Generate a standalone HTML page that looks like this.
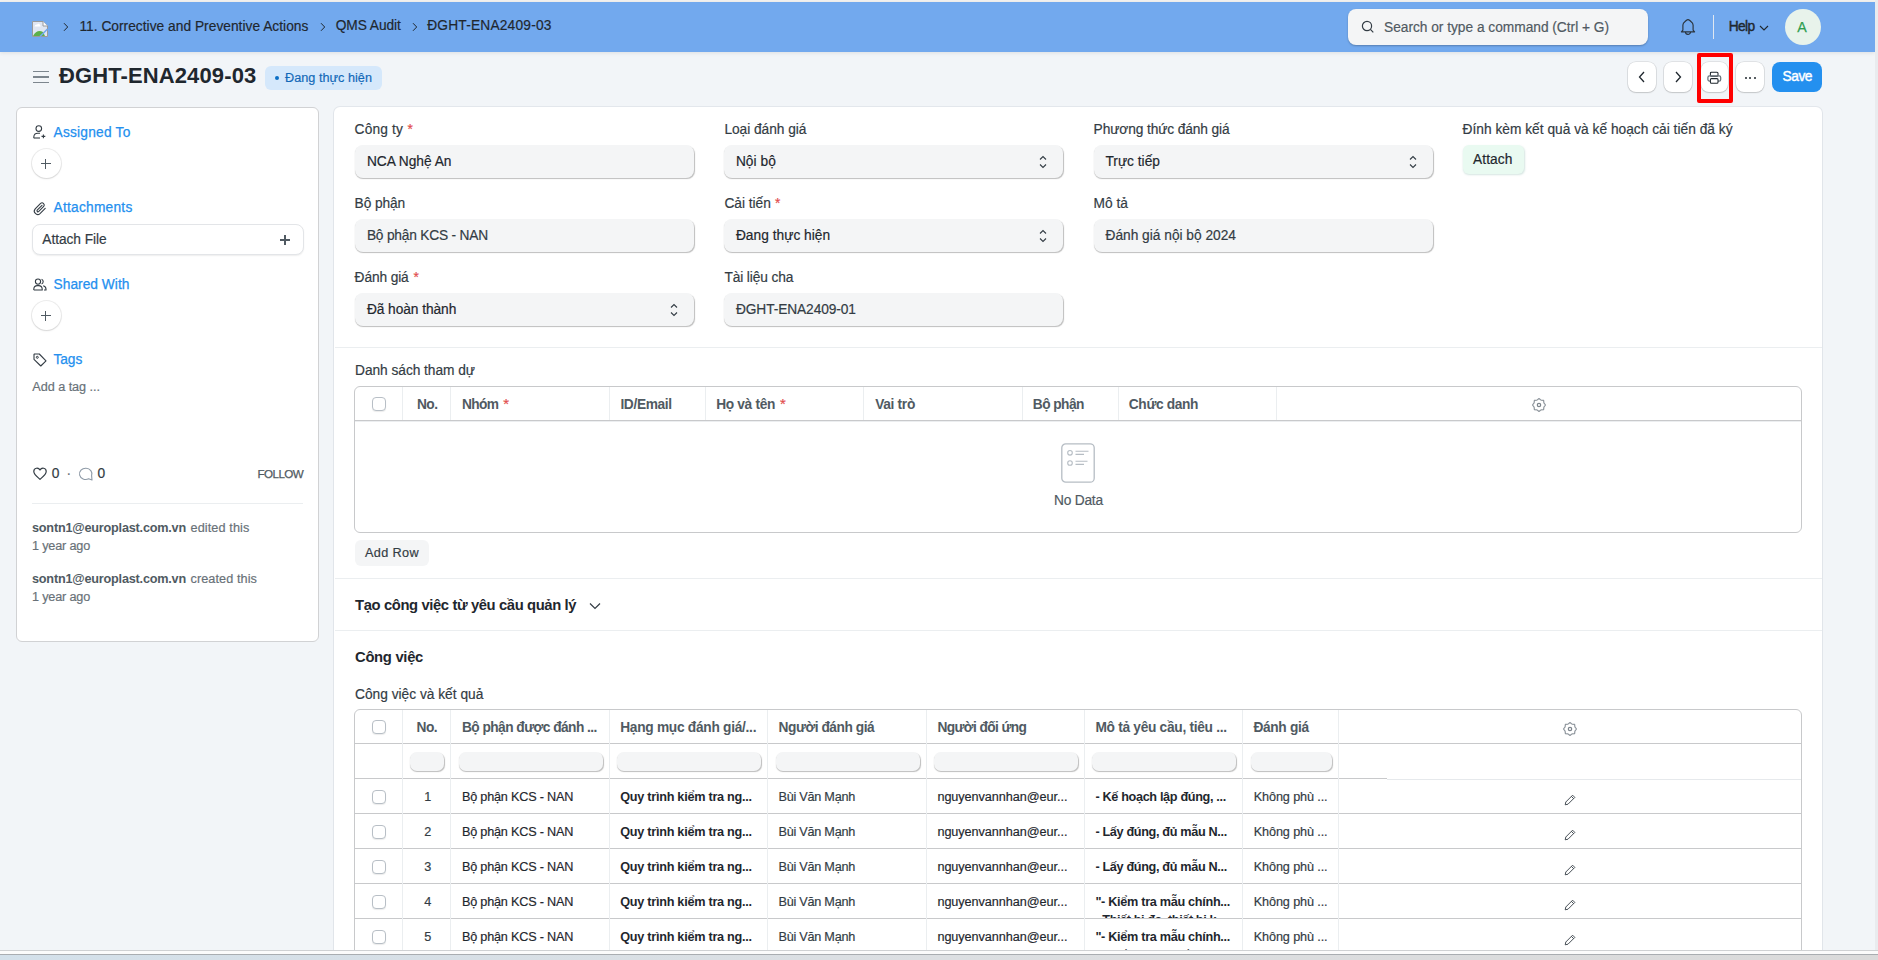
<!DOCTYPE html>
<html><head><meta charset="utf-8">
<style>
html,body{margin:0;padding:0;}
body{width:1878px;height:960px;overflow:hidden;position:relative;background:#f2f5f8;font-family:"Liberation Sans",sans-serif;}
.t{position:absolute;white-space:pre;font-family:"Liberation Sans",sans-serif;}
.a{position:absolute;box-sizing:border-box;}
.inp{position:absolute;box-sizing:border-box;background:#f4f5f6;border-radius:8px;box-shadow:0.8px 1px 1px rgba(0,0,0,0.26);}
.btn{position:absolute;box-sizing:border-box;background:#fff;border-radius:8px;box-shadow:0 0 0 0.8px rgba(0,0,0,0.10),0 1px 1.5px rgba(0,0,0,0.13);}
.vl{position:absolute;width:1px;background:#ebeef0;}
.hl{position:absolute;height:1px;}
.cb{position:absolute;box-sizing:border-box;width:14px;height:14px;border:1px solid #b8bfc6;border-radius:4px;background:#fff;box-shadow:0 1px 1px rgba(0,0,0,0.08);}
.fi{position:absolute;box-sizing:border-box;height:19px;top:752px;background:#f4f5f6;border-radius:7px;box-shadow:0.8px 1px 1px rgba(0,0,0,0.26);}
svg{position:absolute;overflow:visible;}
</style></head>
<body>
<!-- top strip -->
<div class="a" style="left:0;top:0;width:1878px;height:2px;background:#f3f2f0;"></div>
<!-- navbar -->
<div class="a" style="left:0;top:2px;width:1875px;height:50px;background:#72a9ee;box-shadow:0 1px 4px rgba(0,0,0,0.09);"></div>
<!-- right scrollbar strip -->
<div class="a" style="left:1875px;top:0;width:3px;height:950px;background:#e9ebee;"></div>

<!-- broken image icon -->
<svg style="left:32px;top:21px" width="16" height="16" viewBox="0 0 16 16">
  <path d="M0.5 0.5 H11 L15.5 5 V15.5 H0.5 Z" fill="#dfe6f2" stroke="#9a9a9a" stroke-width="1"/>
  <path d="M11 0.5 V5 H15.5" fill="#fff" stroke="#9a9a9a" stroke-width="1"/>
  <path d="M2.5 5.5 Q3 3.3 5.2 3.6 Q6.3 2 7.8 3.6 Q8.6 4.5 8.6 5.5 Z" fill="#fff"/>
  <path d="M1 15 Q5 8 11 11 L13 15 Z" fill="#5cb04a"/>
  <path d="M8 15.5 L15.5 8" stroke="#72a9ee" stroke-width="1.6"/>
</svg>
<!-- breadcrumb chevrons -->
<svg style="left:63px;top:23px" width="6" height="8" viewBox="0 0 6 8"><path d="M1 0.2 L4.7 4 L1 7.8" fill="none" stroke="#1f272e" stroke-width="1.0"/></svg>
<svg style="left:319.5px;top:23px" width="6" height="8" viewBox="0 0 6 8"><path d="M1 0.2 L4.7 4 L1 7.8" fill="none" stroke="#1f272e" stroke-width="1.0"/></svg>
<svg style="left:412px;top:23px" width="6" height="8" viewBox="0 0 6 8"><path d="M1 0.2 L4.7 4 L1 7.8" fill="none" stroke="#1f272e" stroke-width="1.0"/></svg>

<!-- search -->
<div class="a" style="left:1348px;top:9px;width:300px;height:36px;background:#f4f5f6;border-radius:8px;box-shadow:0 1px 2px rgba(0,0,0,0.25);"></div>
<svg style="left:1361px;top:20px" width="14" height="14" viewBox="0 0 14 14"><circle cx="6" cy="6" r="4.6" fill="none" stroke="#333c44" stroke-width="1.2"/><path d="M9.4 9.4 L12.3 12.3" stroke="#333c44" stroke-width="1.2"/></svg>
<!-- bell -->
<svg style="left:1680px;top:18px" width="16" height="18" viewBox="0 0 16 18">
  <path d="M1.4 13.8 L2.9 12.2 V7 Q3 5.2 4.8 3.8 L6.5 2.3 Q8 1 9.5 2.3 L11.2 3.8 Q13 5.2 13.1 7 V12.2 L14.6 13.8 Z" fill="none" stroke="#2a333b" stroke-width="1.15" stroke-linejoin="round"/>
  <path d="M5.5 14 A2.5 2.4 0 0 0 10.5 14" fill="none" stroke="#2a333b" stroke-width="1.15"/>
</svg>
<div class="a" style="left:1713px;top:15px;width:1px;height:24px;background:#dfe7f1;"></div>
<svg style="left:1759px;top:25px" width="10" height="6" viewBox="0 0 10 6"><path d="M1 1 L5 5 L9 1" fill="none" stroke="#1f272e" stroke-width="1.1"/></svg>
<div class="a" style="left:1785px;top:9px;width:36px;height:36px;border-radius:50%;background:#e8f3eb;"></div>

<!-- header -->
<div class="a" style="left:33px;top:71.1px;width:15.5px;height:1.4px;background:#7d868e;"></div>
<div class="a" style="left:33px;top:76.3px;width:15.5px;height:1.4px;background:#7d868e;"></div>
<div class="a" style="left:33px;top:81.5px;width:15.5px;height:1.4px;background:#7d868e;"></div>
<div class="a" style="left:265.3px;top:66px;width:116.6px;height:24px;background:#d5e8fb;border-radius:6px;"></div>
<div class="a" style="left:275px;top:75.5px;width:4px;height:4px;border-radius:50%;background:#0b6ec5;"></div>

<div class="btn" style="left:1628px;top:62px;width:28px;height:30px;"></div>
<div class="btn" style="left:1664px;top:62px;width:28px;height:30px;"></div>
<div class="btn" style="left:1701px;top:62px;width:27px;height:30px;"></div>
<div class="btn" style="left:1736px;top:62px;width:28px;height:30px;"></div>
<div class="a" style="left:1772px;top:62px;width:50px;height:30px;background:#2490ef;border-radius:8px;"></div>
<svg style="left:1637px;top:71px" width="10" height="12" viewBox="0 0 10 12"><path d="M7 1 L2.5 6 L7 11" fill="none" stroke="#1f272e" stroke-width="1.3"/></svg>
<svg style="left:1673px;top:71px" width="10" height="12" viewBox="0 0 10 12"><path d="M3 1 L7.5 6 L3 11" fill="none" stroke="#1f272e" stroke-width="1.3"/></svg>
<svg style="left:1707px;top:70.5px" width="15" height="14" viewBox="0 0 15 14">
  <rect x="3.4" y="1.2" width="7.6" height="4" rx="1" fill="none" stroke="#1f272e" stroke-width="1.05"/>
  <rect x="0.9" y="4.8" width="12.8" height="5.2" rx="1.6" fill="none" stroke="#6a737b" stroke-width="1.25"/>
  <rect x="3.4" y="7.6" width="7.6" height="4.6" rx="1" fill="#fff" stroke="#1f272e" stroke-width="1.05"/>
</svg>
<div class="a" style="left:1744.5px;top:77px;width:2.2px;height:2.2px;background:#1f272e;border-radius:1px;"></div>
<div class="a" style="left:1749px;top:77px;width:2.2px;height:2.2px;background:#1f272e;border-radius:1px;"></div>
<div class="a" style="left:1753.5px;top:77px;width:2.2px;height:2.2px;background:#1f272e;border-radius:1px;"></div>
<!-- red highlight -->
<div class="a" style="left:1697px;top:53px;width:36px;height:50px;border:4px solid #ff0000;border-radius:2px;"></div>

<!-- sidebar card -->
<div class="a" style="left:16px;top:107px;width:303px;height:535px;background:#fff;border:1px solid #d1d2d4;border-radius:6px;"></div>
<svg style="left:33px;top:125px" width="14" height="14" viewBox="0 0 14 14">
  <circle cx="5.8" cy="3.6" r="2.8" fill="none" stroke="#333c44" stroke-width="1.1"/>
  <path d="M0.8 13.2 V12 A4 4 0 0 1 4.8 8.2 H7" fill="none" stroke="#333c44" stroke-width="1.1"/>
  <path d="M1 13 H7" stroke="#333c44" stroke-width="1.1"/>
  <path d="M10.4 9.5 V13.3 M8.5 11.4 H12.3" stroke="#333c44" stroke-width="1.1"/>
</svg>
<div class="a" style="left:31.5px;top:149px;width:29px;height:29px;border-radius:50%;background:#fff;box-shadow:0 0 0 1px rgba(0,0,0,0.07),0 1px 2px rgba(0,0,0,0.10);"></div>
<div class="a" style="left:40.5px;top:162.8px;width:10px;height:1.6px;background:#505a62;"></div>
<div class="a" style="left:44.8px;top:158.5px;width:1.6px;height:10px;background:#505a62;"></div>

<svg style="left:33px;top:202px" width="14" height="14" viewBox="0 0 14 14">
  <path d="M12.2 6.4 L7 11.6 A3.4 3.4 0 0 1 2.2 6.8 L7.6 1.4 A2.2 2.2 0 0 1 10.7 4.5 L5.6 9.6 A1 1 0 0 1 4.2 8.2 L9 3.4" fill="none" stroke="#333c44" stroke-width="1.1" stroke-linecap="round"/>
</svg>
<div class="a" style="left:31.5px;top:224.3px;width:272px;height:31px;background:#fff;border-radius:8px;border:1px solid #e3e5e8;box-shadow:0 1px 1.5px rgba(0,0,0,0.07);"></div>
<div class="a" style="left:279.6px;top:239px;width:10.4px;height:1.6px;background:#505a62;"></div>
<div class="a" style="left:284px;top:234.6px;width:1.6px;height:10.4px;background:#505a62;"></div>

<svg style="left:33px;top:278px" width="14" height="13" viewBox="0 0 14 13">
  <circle cx="5" cy="3.6" r="2.6" fill="none" stroke="#333c44" stroke-width="1.1"/>
  <path d="M0.8 12 V11 A3.6 3.6 0 0 1 4.4 7.6 H5.6 A3.6 3.6 0 0 1 9.2 11 V12 H0.8" fill="none" stroke="#333c44" stroke-width="1.1"/>
  <path d="M8.6 1.2 A2.6 2.6 0 0 1 8.6 6 M10.2 7.8 A3.6 3.6 0 0 1 13 11 V12 H11" fill="none" stroke="#333c44" stroke-width="1.1"/>
</svg>
<div class="a" style="left:31.5px;top:301px;width:29px;height:29px;border-radius:50%;background:#fff;box-shadow:0 0 0 1px rgba(0,0,0,0.07),0 1px 2px rgba(0,0,0,0.10);"></div>
<div class="a" style="left:40.5px;top:314.8px;width:10px;height:1.6px;background:#505a62;"></div>
<div class="a" style="left:44.8px;top:310.5px;width:1.6px;height:10px;background:#505a62;"></div>

<svg style="left:33px;top:353px" width="14" height="14" viewBox="0 0 14 14">
  <path d="M1 1.5 V6.3 L7.8 13 L13 7.8 L6.3 1 H1.5 Z" fill="none" stroke="#333c44" stroke-width="1.1" stroke-linejoin="round"/>
  <circle cx="4.3" cy="4.3" r="1" fill="none" stroke="#333c44" stroke-width="1"/>
</svg>

<svg style="left:33px;top:467px" width="14" height="13" viewBox="0 0 14 13">
  <path d="M7 3 C5.5 0.2 0.8 0.6 0.8 4.4 C0.8 7.4 4.5 10 7 12.3 C9.5 10 13.2 7.4 13.2 4.4 C13.2 0.6 8.5 0.2 7 3 Z" fill="none" stroke="#333c44" stroke-width="1.2" stroke-linejoin="round"/>
</svg>
<svg style="left:79px;top:467px" width="14" height="14" viewBox="0 0 14 14">
  <path d="M9.6 11.8 A6.2 5.6 0 1 1 12.6 8.6 L13 13 Z" fill="none" stroke="#8d99a6" stroke-width="1.1" stroke-linejoin="round"/>
</svg>
<div class="a" style="left:32px;top:503px;width:271px;height:1px;background:#ebeef0;"></div>

<!-- main card -->
<div class="a" style="left:333.5px;top:106.5px;width:1488.5px;height:900px;background:#fff;border-radius:6px;box-shadow:0 0 0 1px rgba(40,60,90,0.07),0 1px 2px rgba(40,60,90,0.06);"></div>

<!-- inputs -->
<div class="inp" style="left:355px;top:145px;width:339px;height:33px;"></div>
<div class="inp" style="left:724px;top:145px;width:339px;height:33px;"></div>
<div class="inp" style="left:1093.5px;top:145px;width:339px;height:33px;"></div>
<div class="inp" style="left:355px;top:219px;width:339px;height:33px;"></div>
<div class="inp" style="left:724px;top:219px;width:339px;height:33px;"></div>
<div class="inp" style="left:1093.5px;top:219px;width:339px;height:33px;"></div>
<div class="inp" style="left:355px;top:293px;width:339px;height:33px;"></div>
<div class="inp" style="left:724px;top:293px;width:339px;height:33px;"></div>
<!-- select arrows -->
<svg style="left:1039px;top:154px" width="8" height="16" viewBox="0 0 8 16"><path d="M1 5.5 L4 2.5 L7 5.5 M1 10.5 L4 13.5 L7 10.5" fill="none" stroke="#333c44" stroke-width="1.1"/></svg>
<svg style="left:1409px;top:154px" width="8" height="16" viewBox="0 0 8 16"><path d="M1 5.5 L4 2.5 L7 5.5 M1 10.5 L4 13.5 L7 10.5" fill="none" stroke="#333c44" stroke-width="1.1"/></svg>
<svg style="left:1039px;top:228px" width="8" height="16" viewBox="0 0 8 16"><path d="M1 5.5 L4 2.5 L7 5.5 M1 10.5 L4 13.5 L7 10.5" fill="none" stroke="#333c44" stroke-width="1.1"/></svg>
<svg style="left:670px;top:302px" width="8" height="16" viewBox="0 0 8 16"><path d="M1 5.5 L4 2.5 L7 5.5 M1 10.5 L4 13.5 L7 10.5" fill="none" stroke="#333c44" stroke-width="1.1"/></svg>
<!-- attach button -->
<div class="a" style="left:1463px;top:145.3px;width:60.5px;height:28.7px;background:#e9faf1;border-radius:6px;box-shadow:0.8px 1px 2px rgba(20,110,90,0.18);"></div>

<div class="a" style="left:335px;top:347px;width:1487px;height:1px;background:#ebeef0;"></div>

<!-- table 1 -->
<div class="a" style="left:354px;top:386px;width:1447.5px;height:147px;border:1px solid #c8c9cb;border-radius:6px;"></div>
<div class="a" style="left:355px;top:419.8px;width:1446px;height:1.2px;background:#c8c9cb;"></div>
<div class="a" style="left:355px;top:421px;width:1446px;height:1.2px;background:#eceef0;"></div>
<div class="vl" style="left:402px;top:387px;height:33px;"></div>
<div class="vl" style="left:450px;top:387px;height:33px;"></div>
<div class="vl" style="left:609px;top:387px;height:33px;"></div>
<div class="vl" style="left:705px;top:387px;height:33px;"></div>
<div class="vl" style="left:863px;top:387px;height:33px;"></div>
<div class="vl" style="left:1022px;top:387px;height:33px;"></div>
<div class="vl" style="left:1118px;top:387px;height:33px;"></div>
<div class="vl" style="left:1276px;top:387px;height:33px;"></div>
<div class="cb" style="left:372px;top:397px;"></div>
<svg style="left:1530.9px;top:396.8px" width="16" height="16" viewBox="0 0 16 16"><path d="M8.00 1.50 L10.03 3.10 L12.60 3.40 L12.90 5.97 L14.50 8.00 L12.90 10.03 L12.60 12.60 L10.03 12.90 L8.00 14.50 L5.97 12.90 L3.40 12.60 L3.10 10.03 L1.50 8.00 L3.10 5.97 L3.40 3.40 L5.97 3.10 Z" fill="none" stroke="#8f969d" stroke-width="1.2" stroke-linejoin="round"/><circle cx="8" cy="8" r="1.7" fill="none" stroke="#7d858c" stroke-width="1.2"/></svg>
<!-- no data icon -->
<svg style="left:1061px;top:443px" width="34" height="40" viewBox="0 0 34 40">
  <rect x="0.8" y="0.8" width="32.4" height="38.4" rx="4" fill="none" stroke="#b6bdc4" stroke-width="1.3"/>
  <circle cx="9" cy="9.8" r="2.3" fill="none" stroke="#b6bdc4" stroke-width="1.1"/>
  <circle cx="9" cy="20" r="2.3" fill="none" stroke="#b6bdc4" stroke-width="1.1"/>
  <path d="M14.5 8.2 H27.5 M14.5 11.4 H23 M14.5 18.2 H26.5 M14.5 21.4 H23" stroke="#b6bdc4" stroke-width="1.1"/>
</svg>
<div class="a" style="left:355px;top:540px;width:74px;height:26px;background:#f4f5f6;border-radius:6px;"></div>
<div class="a" style="left:335px;top:578px;width:1487px;height:1px;background:#ebeef0;"></div>
<svg style="left:589px;top:602px" width="12" height="8" viewBox="0 0 12 8"><path d="M1 1.5 L6 6.5 L11 1.5" fill="none" stroke="#333c44" stroke-width="1.2"/></svg>
<div class="a" style="left:335px;top:630px;width:1487px;height:1px;background:#ebeef0;"></div>

<!-- table 2 -->
<div class="a" style="left:354px;top:709px;width:1447.5px;height:400px;border:1px solid #c8c9cb;border-radius:6px;"></div>
<div class="a" style="left:355px;top:743px;width:1446px;height:1.2px;background:#c8c9cb;"></div>
<div class="a" style="left:355px;top:778px;width:1032px;height:1.2px;background:#c8c9cb;"></div>
<div class="a" style="left:1387px;top:778.5px;width:414px;height:1px;background:#e6e9ec;"></div>
<div class="a" style="left:355px;top:813px;width:1446px;height:1.3px;background:#c8c9cb;"></div>
<div class="a" style="left:355px;top:848px;width:1446px;height:1.3px;background:#c8c9cb;"></div>
<div class="a" style="left:355px;top:883px;width:1446px;height:1.3px;background:#c8c9cb;"></div>
<div class="a" style="left:355px;top:918px;width:1446px;height:1.3px;background:#c8c9cb;"></div>
<div class="vl" style="left:402px;top:710px;height:250px;"></div>
<div class="vl" style="left:450px;top:710px;height:250px;"></div>
<div class="vl" style="left:609px;top:710px;height:250px;"></div>
<div class="vl" style="left:767px;top:710px;height:250px;"></div>
<div class="vl" style="left:926px;top:710px;height:250px;"></div>
<div class="vl" style="left:1084px;top:710px;height:250px;"></div>
<div class="vl" style="left:1242px;top:710px;height:250px;"></div>
<div class="vl" style="left:1338px;top:710px;height:250px;"></div>
<div class="cb" style="left:372px;top:720px;"></div>
<div class="fi" style="left:410px;width:34px;"></div>
<div class="fi" style="left:459px;width:144px;"></div>
<div class="fi" style="left:617px;width:144px;"></div>
<div class="fi" style="left:776px;width:144px;"></div>
<div class="fi" style="left:934px;width:144px;"></div>
<div class="fi" style="left:1092px;width:144px;"></div>
<div class="fi" style="left:1251px;width:81px;"></div>
<svg style="left:1562.0px;top:720.7px" width="16" height="16" viewBox="0 0 16 16"><path d="M8.00 1.50 L10.03 3.10 L12.60 3.40 L12.90 5.97 L14.50 8.00 L12.90 10.03 L12.60 12.60 L10.03 12.90 L8.00 14.50 L5.97 12.90 L3.40 12.60 L3.10 10.03 L1.50 8.00 L3.10 5.97 L3.40 3.40 L5.97 3.10 Z" fill="none" stroke="#8f969d" stroke-width="1.2" stroke-linejoin="round"/><circle cx="8" cy="8" r="1.7" fill="none" stroke="#7d858c" stroke-width="1.2"/></svg>
<div class="cb" style="left:372px;top:790px;"></div>
<svg style="left:1564px;top:794px" width="12" height="12" viewBox="0 0 12 12"><path d="M8.6 1.2 L10.8 3.4 L4 10.2 L1.2 10.8 L1.8 8 Z M7.4 2.4 L9.6 4.6" fill="none" stroke="#333c44" stroke-width="0.9" stroke-linejoin="round"/></svg>
<div class="cb" style="left:372px;top:825px;"></div>
<svg style="left:1564px;top:829px" width="12" height="12" viewBox="0 0 12 12"><path d="M8.6 1.2 L10.8 3.4 L4 10.2 L1.2 10.8 L1.8 8 Z M7.4 2.4 L9.6 4.6" fill="none" stroke="#333c44" stroke-width="0.9" stroke-linejoin="round"/></svg>
<div class="cb" style="left:372px;top:860px;"></div>
<svg style="left:1564px;top:864px" width="12" height="12" viewBox="0 0 12 12"><path d="M8.6 1.2 L10.8 3.4 L4 10.2 L1.2 10.8 L1.8 8 Z M7.4 2.4 L9.6 4.6" fill="none" stroke="#333c44" stroke-width="0.9" stroke-linejoin="round"/></svg>
<div class="cb" style="left:372px;top:895px;"></div>
<svg style="left:1564px;top:899px" width="12" height="12" viewBox="0 0 12 12"><path d="M8.6 1.2 L10.8 3.4 L4 10.2 L1.2 10.8 L1.8 8 Z M7.4 2.4 L9.6 4.6" fill="none" stroke="#333c44" stroke-width="0.9" stroke-linejoin="round"/></svg>
<div class="cb" style="left:372px;top:930px;"></div>
<svg style="left:1564px;top:934px" width="12" height="12" viewBox="0 0 12 12"><path d="M8.6 1.2 L10.8 3.4 L4 10.2 L1.2 10.8 L1.8 8 Z M7.4 2.4 L9.6 4.6" fill="none" stroke="#333c44" stroke-width="0.9" stroke-linejoin="round"/></svg>

<span class="t" style="left:79.4px;top:17.63px;font-size:13.74px;line-height:17px;font-weight:400;color:#1f272e;letter-spacing:0.027px;-webkit-text-stroke:0.18px #1f272e;">11. Corrective and Preventive Actions</span>
<span class="t" style="left:335.7px;top:17.43px;font-size:13.74px;line-height:17px;font-weight:400;color:#1f272e;letter-spacing:-0.051px;-webkit-text-stroke:0.18px #1f272e;">QMS Audit</span>
<span class="t" style="left:427.2px;top:17.43px;font-size:13.74px;line-height:17px;font-weight:400;color:#1f272e;letter-spacing:0.202px;-webkit-text-stroke:0.18px #1f272e;">ĐGHT-ENA2409-03</span>
<span class="t" style="left:1384.0px;top:18.63px;font-size:13.74px;line-height:17px;font-weight:400;color:#505a62;letter-spacing:-0.016px;-webkit-text-stroke:0.18px #505a62;">Search or type a command (Ctrl + G)</span>
<span class="t" style="left:1728.8px;top:18.13px;font-size:13.74px;line-height:17px;font-weight:400;color:#1f272e;letter-spacing:-0.662px;-webkit-text-stroke:0.42px #1f272e;">Help</span>
<span class="t" style="left:1797.2px;top:17.85px;font-size:14.27px;line-height:18px;font-weight:400;color:#2f9e50;letter-spacing:0.000px;-webkit-text-stroke:0.25px #2f9e50;">A</span>
<span class="t" style="left:58.9px;top:61.77px;font-size:21.99px;line-height:27px;font-weight:700;color:#1f272e;letter-spacing:0.133px;">ĐGHT-ENA2409-03</span>
<span class="t" style="left:285.0px;top:69.90px;font-size:12.68px;line-height:16px;font-weight:400;color:#1268b8;letter-spacing:0.022px;-webkit-text-stroke:0.18px #1268b8;">Đang thực hiện</span>
<span class="t" style="left:1782.4px;top:67.93px;font-size:13.74px;line-height:17px;font-weight:400;color:#ffffff;letter-spacing:-0.403px;-webkit-text-stroke:0.42px #ffffff;">Save</span>
<span class="t" style="left:53.5px;top:123.53px;font-size:13.74px;line-height:17px;font-weight:400;color:#2490ef;letter-spacing:0.220px;-webkit-text-stroke:0.25px #2490ef;">Assigned To</span>
<span class="t" style="left:53.5px;top:199.33px;font-size:13.74px;line-height:17px;font-weight:400;color:#2490ef;letter-spacing:0.241px;-webkit-text-stroke:0.25px #2490ef;">Attachments</span>
<span class="t" style="left:42.3px;top:230.73px;font-size:13.74px;line-height:17px;font-weight:400;color:#333c44;letter-spacing:-0.045px;-webkit-text-stroke:0.18px #333c44;">Attach File</span>
<span class="t" style="left:53.5px;top:275.63px;font-size:13.74px;line-height:17px;font-weight:400;color:#2490ef;letter-spacing:0.038px;-webkit-text-stroke:0.25px #2490ef;">Shared With</span>
<span class="t" style="left:53.5px;top:351.33px;font-size:13.74px;line-height:17px;font-weight:400;color:#2490ef;letter-spacing:-0.079px;-webkit-text-stroke:0.25px #2490ef;">Tags</span>
<span class="t" style="left:32.3px;top:378.60px;font-size:12.68px;line-height:16px;font-weight:400;color:#687178;letter-spacing:-0.050px;-webkit-text-stroke:0.18px #687178;">Add a tag ...</span>
<span class="t" style="left:51.8px;top:464.73px;font-size:13.74px;line-height:17px;font-weight:400;color:#333c44;letter-spacing:0.000px;-webkit-text-stroke:0.18px #333c44;">0</span>
<span class="t" style="left:66.5px;top:464.73px;font-size:13.74px;line-height:17px;font-weight:400;color:#687178;letter-spacing:0.000px;-webkit-text-stroke:0.18px #687178;">·</span>
<span class="t" style="left:97.5px;top:464.73px;font-size:13.74px;line-height:17px;font-weight:400;color:#333c44;letter-spacing:0.000px;-webkit-text-stroke:0.18px #333c44;">0</span>
<span class="t" style="left:257.5px;top:465.97px;font-size:11.63px;line-height:15px;font-weight:400;color:#505a62;letter-spacing:-0.557px;-webkit-text-stroke:0.25px #505a62;">FOLLOW</span>
<span class="t" style="left:32.0px;top:519.60px;font-size:12.68px;line-height:16px;font-weight:700;color:#505a62;letter-spacing:-0.210px;">sontn1@europlast.com.vn</span>
<span class="t" style="left:190.5px;top:519.60px;font-size:12.68px;line-height:16px;font-weight:400;color:#687178;letter-spacing:0.111px;-webkit-text-stroke:0.18px #687178;">edited this</span>
<span class="t" style="left:32.0px;top:537.60px;font-size:12.68px;line-height:16px;font-weight:400;color:#687178;letter-spacing:-0.189px;-webkit-text-stroke:0.18px #687178;">1 year ago</span>
<span class="t" style="left:32.0px;top:570.60px;font-size:12.68px;line-height:16px;font-weight:700;color:#505a62;letter-spacing:-0.210px;">sontn1@europlast.com.vn</span>
<span class="t" style="left:190.5px;top:570.60px;font-size:12.68px;line-height:16px;font-weight:400;color:#687178;letter-spacing:0.082px;-webkit-text-stroke:0.18px #687178;">created this</span>
<span class="t" style="left:32.0px;top:588.60px;font-size:12.68px;line-height:16px;font-weight:400;color:#687178;letter-spacing:-0.189px;-webkit-text-stroke:0.18px #687178;">1 year ago</span>
<span class="t" style="left:354.6px;top:120.93px;font-size:13.74px;line-height:17px;font-weight:400;color:#333c44;letter-spacing:0.151px;-webkit-text-stroke:0.18px #333c44;">Công ty</span>
<span class="t" style="left:724.4px;top:120.93px;font-size:13.74px;line-height:17px;font-weight:400;color:#333c44;letter-spacing:-0.037px;-webkit-text-stroke:0.18px #333c44;">Loại đánh giá</span>
<span class="t" style="left:1093.6px;top:120.93px;font-size:13.74px;line-height:17px;font-weight:400;color:#333c44;letter-spacing:-0.106px;-webkit-text-stroke:0.18px #333c44;">Phương thức đánh giá</span>
<span class="t" style="left:1462.5px;top:120.93px;font-size:13.74px;line-height:17px;font-weight:400;color:#333c44;letter-spacing:0.012px;-webkit-text-stroke:0.18px #333c44;">Đính kèm kết quả và kế hoạch cải tiến đã ký</span>
<span class="t" style="left:354.6px;top:194.73px;font-size:13.74px;line-height:17px;font-weight:400;color:#333c44;letter-spacing:-0.110px;-webkit-text-stroke:0.18px #333c44;">Bộ phận</span>
<span class="t" style="left:724.4px;top:194.73px;font-size:13.74px;line-height:17px;font-weight:400;color:#333c44;letter-spacing:-0.022px;-webkit-text-stroke:0.18px #333c44;">Cải tiến</span>
<span class="t" style="left:1093.6px;top:194.73px;font-size:13.74px;line-height:17px;font-weight:400;color:#333c44;letter-spacing:0.008px;-webkit-text-stroke:0.18px #333c44;">Mô tả</span>
<span class="t" style="left:354.6px;top:268.73px;font-size:13.74px;line-height:17px;font-weight:400;color:#333c44;letter-spacing:-0.123px;-webkit-text-stroke:0.18px #333c44;">Đánh giá</span>
<span class="t" style="left:724.4px;top:268.73px;font-size:13.74px;line-height:17px;font-weight:400;color:#333c44;letter-spacing:-0.104px;-webkit-text-stroke:0.18px #333c44;">Tài liệu cha</span>
<span class="t" style="left:407.5px;top:120.93px;font-size:13.74px;line-height:17px;font-weight:400;color:#e24c4c;letter-spacing:0.000px;-webkit-text-stroke:0.18px #e24c4c;">*</span>
<span class="t" style="left:775.0px;top:194.73px;font-size:13.74px;line-height:17px;font-weight:400;color:#e24c4c;letter-spacing:0.000px;-webkit-text-stroke:0.18px #e24c4c;">*</span>
<span class="t" style="left:413.5px;top:268.73px;font-size:13.74px;line-height:17px;font-weight:400;color:#e24c4c;letter-spacing:0.000px;-webkit-text-stroke:0.18px #e24c4c;">*</span>
<span class="t" style="left:366.9px;top:153.03px;font-size:13.74px;line-height:17px;font-weight:400;color:#1f272e;letter-spacing:-0.023px;-webkit-text-stroke:0.18px #1f272e;">NCA Nghệ An</span>
<span class="t" style="left:735.9px;top:153.03px;font-size:13.74px;line-height:17px;font-weight:400;color:#1f272e;letter-spacing:0.049px;-webkit-text-stroke:0.18px #1f272e;">Nội bộ</span>
<span class="t" style="left:1105.5px;top:153.03px;font-size:13.74px;line-height:17px;font-weight:400;color:#1f272e;letter-spacing:-0.009px;-webkit-text-stroke:0.18px #1f272e;">Trực tiếp</span>
<span class="t" style="left:1473.0px;top:151.23px;font-size:13.74px;line-height:17px;font-weight:400;color:#1f272e;letter-spacing:0.110px;-webkit-text-stroke:0.18px #1f272e;">Attach</span>
<span class="t" style="left:366.9px;top:227.03px;font-size:13.74px;line-height:17px;font-weight:400;color:#333c44;letter-spacing:-0.202px;-webkit-text-stroke:0.18px #333c44;">Bộ phận KCS - NAN</span>
<span class="t" style="left:735.9px;top:227.03px;font-size:13.74px;line-height:17px;font-weight:400;color:#1f272e;letter-spacing:0.025px;-webkit-text-stroke:0.18px #1f272e;">Đang thực hiện</span>
<span class="t" style="left:1105.5px;top:227.03px;font-size:13.74px;line-height:17px;font-weight:400;color:#333c44;letter-spacing:-0.005px;-webkit-text-stroke:0.18px #333c44;">Đánh giá nội bộ 2024</span>
<span class="t" style="left:366.9px;top:301.03px;font-size:13.74px;line-height:17px;font-weight:400;color:#1f272e;letter-spacing:-0.056px;-webkit-text-stroke:0.18px #1f272e;">Đã hoàn thành</span>
<span class="t" style="left:735.9px;top:301.03px;font-size:13.74px;line-height:17px;font-weight:400;color:#333c44;letter-spacing:-0.092px;-webkit-text-stroke:0.18px #333c44;">ĐGHT-ENA2409-01</span>
<span class="t" style="left:355.0px;top:362.03px;font-size:13.74px;line-height:17px;font-weight:400;color:#333c44;letter-spacing:-0.040px;-webkit-text-stroke:0.18px #333c44;">Danh sách tham dự</span>
<span class="t" style="left:417.0px;top:395.53px;font-size:13.74px;line-height:17px;font-weight:700;color:#505a62;letter-spacing:-0.575px;">No.</span>
<span class="t" style="left:461.9px;top:395.53px;font-size:13.74px;line-height:17px;font-weight:700;color:#505a62;letter-spacing:-0.580px;">Nhóm</span>
<span class="t" style="left:620.4px;top:395.53px;font-size:13.74px;line-height:17px;font-weight:700;color:#505a62;letter-spacing:-0.350px;">ID/Email</span>
<span class="t" style="left:716.2px;top:395.53px;font-size:13.74px;line-height:17px;font-weight:700;color:#505a62;letter-spacing:-0.336px;">Họ và tên</span>
<span class="t" style="left:875.2px;top:395.53px;font-size:13.74px;line-height:17px;font-weight:700;color:#505a62;letter-spacing:-0.312px;">Vai trò</span>
<span class="t" style="left:1032.8px;top:395.53px;font-size:13.74px;line-height:17px;font-weight:700;color:#505a62;letter-spacing:-0.562px;">Bộ phận</span>
<span class="t" style="left:1128.8px;top:395.53px;font-size:13.74px;line-height:17px;font-weight:700;color:#505a62;letter-spacing:-0.357px;">Chức danh</span>
<span class="t" style="left:503.3px;top:395.17px;font-size:14.80px;line-height:18px;font-weight:400;color:#e24c4c;letter-spacing:0.000px;-webkit-text-stroke:0.18px #e24c4c;">*</span>
<span class="t" style="left:780.1px;top:395.17px;font-size:14.80px;line-height:18px;font-weight:400;color:#e24c4c;letter-spacing:0.000px;-webkit-text-stroke:0.18px #e24c4c;">*</span>
<span class="t" style="left:1054.0px;top:491.73px;font-size:13.74px;line-height:17px;font-weight:400;color:#505a62;letter-spacing:-0.227px;-webkit-text-stroke:0.18px #505a62;">No Data</span>
<span class="t" style="left:365.0px;top:544.60px;font-size:12.68px;line-height:16px;font-weight:400;color:#333c44;letter-spacing:0.368px;-webkit-text-stroke:0.18px #333c44;">Add Row</span>
<span class="t" style="left:355.1px;top:596.07px;font-size:14.80px;line-height:18px;font-weight:700;color:#1f272e;letter-spacing:-0.393px;">Tạo công việc từ yêu cầu quản lý</span>
<span class="t" style="left:355.0px;top:647.57px;font-size:14.80px;line-height:18px;font-weight:700;color:#1f272e;letter-spacing:-0.302px;">Công việc</span>
<span class="t" style="left:355.0px;top:685.93px;font-size:13.74px;line-height:17px;font-weight:400;color:#333c44;letter-spacing:0.002px;-webkit-text-stroke:0.18px #333c44;">Công việc và kết quả</span>
<span class="t" style="left:416.6px;top:719.13px;font-size:13.74px;line-height:17px;font-weight:700;color:#505a62;letter-spacing:-0.575px;">No.</span>
<span class="t" style="left:461.9px;top:719.13px;font-size:13.74px;line-height:17px;font-weight:700;color:#505a62;letter-spacing:-0.542px;">Bộ phận được đánh ...</span>
<span class="t" style="left:620.2px;top:719.13px;font-size:13.74px;line-height:17px;font-weight:700;color:#505a62;letter-spacing:-0.283px;">Hạng mục đánh giá/...</span>
<span class="t" style="left:778.6px;top:719.13px;font-size:13.74px;line-height:17px;font-weight:700;color:#505a62;letter-spacing:-0.466px;">Người đánh giá</span>
<span class="t" style="left:937.4px;top:719.13px;font-size:13.74px;line-height:17px;font-weight:700;color:#505a62;letter-spacing:-0.600px;">Người đối ứng</span>
<span class="t" style="left:1095.4px;top:719.13px;font-size:13.74px;line-height:17px;font-weight:700;color:#505a62;letter-spacing:-0.293px;">Mô tả yêu cầu, tiêu ...</span>
<span class="t" style="left:1253.4px;top:719.13px;font-size:13.74px;line-height:17px;font-weight:700;color:#505a62;letter-spacing:-0.325px;">Đánh giá</span>
<span class="t" style="left:424.2px;top:788.90px;font-size:12.68px;line-height:16px;font-weight:400;color:#333c44;letter-spacing:0.000px;-webkit-text-stroke:0.18px #333c44;">1</span>
<span class="t" style="left:461.9px;top:788.90px;font-size:12.68px;line-height:16px;font-weight:400;color:#1f272e;letter-spacing:-0.201px;-webkit-text-stroke:0.18px #1f272e;">Bộ phận KCS - NAN</span>
<span class="t" style="left:620.2px;top:788.90px;font-size:12.68px;line-height:16px;font-weight:700;color:#1f272e;letter-spacing:-0.267px;">Quy trình kiểm tra ng...</span>
<span class="t" style="left:778.6px;top:788.90px;font-size:12.68px;line-height:16px;font-weight:400;color:#333c44;letter-spacing:-0.267px;-webkit-text-stroke:0.18px #333c44;">Bùi Văn Mạnh</span>
<span class="t" style="left:937.4px;top:788.90px;font-size:12.68px;line-height:16px;font-weight:400;color:#1f272e;letter-spacing:-0.062px;-webkit-text-stroke:0.18px #1f272e;">nguyenvannhan@eur...</span>
<span class="t" style="left:1095.4px;top:788.90px;font-size:12.68px;line-height:16px;font-weight:700;color:#1f272e;letter-spacing:-0.342px;">- Kế hoạch lập đúng, ...</span>
<span class="t" style="left:1253.8px;top:788.90px;font-size:12.68px;line-height:16px;font-weight:400;color:#333c44;letter-spacing:-0.138px;-webkit-text-stroke:0.18px #333c44;">Không phù ...</span>
<span class="t" style="left:424.2px;top:823.90px;font-size:12.68px;line-height:16px;font-weight:400;color:#333c44;letter-spacing:0.000px;-webkit-text-stroke:0.18px #333c44;">2</span>
<span class="t" style="left:461.9px;top:823.90px;font-size:12.68px;line-height:16px;font-weight:400;color:#1f272e;letter-spacing:-0.201px;-webkit-text-stroke:0.18px #1f272e;">Bộ phận KCS - NAN</span>
<span class="t" style="left:620.2px;top:823.90px;font-size:12.68px;line-height:16px;font-weight:700;color:#1f272e;letter-spacing:-0.267px;">Quy trình kiểm tra ng...</span>
<span class="t" style="left:778.6px;top:823.90px;font-size:12.68px;line-height:16px;font-weight:400;color:#333c44;letter-spacing:-0.267px;-webkit-text-stroke:0.18px #333c44;">Bùi Văn Mạnh</span>
<span class="t" style="left:937.4px;top:823.90px;font-size:12.68px;line-height:16px;font-weight:400;color:#1f272e;letter-spacing:-0.062px;-webkit-text-stroke:0.18px #1f272e;">nguyenvannhan@eur...</span>
<span class="t" style="left:1095.4px;top:823.90px;font-size:12.68px;line-height:16px;font-weight:700;color:#1f272e;letter-spacing:-0.344px;">- Lấy đúng, đủ mẫu N...</span>
<span class="t" style="left:1253.8px;top:823.90px;font-size:12.68px;line-height:16px;font-weight:400;color:#333c44;letter-spacing:-0.138px;-webkit-text-stroke:0.18px #333c44;">Không phù ...</span>
<span class="t" style="left:424.2px;top:858.90px;font-size:12.68px;line-height:16px;font-weight:400;color:#333c44;letter-spacing:0.000px;-webkit-text-stroke:0.18px #333c44;">3</span>
<span class="t" style="left:461.9px;top:858.90px;font-size:12.68px;line-height:16px;font-weight:400;color:#1f272e;letter-spacing:-0.201px;-webkit-text-stroke:0.18px #1f272e;">Bộ phận KCS - NAN</span>
<span class="t" style="left:620.2px;top:858.90px;font-size:12.68px;line-height:16px;font-weight:700;color:#1f272e;letter-spacing:-0.267px;">Quy trình kiểm tra ng...</span>
<span class="t" style="left:778.6px;top:858.90px;font-size:12.68px;line-height:16px;font-weight:400;color:#333c44;letter-spacing:-0.267px;-webkit-text-stroke:0.18px #333c44;">Bùi Văn Mạnh</span>
<span class="t" style="left:937.4px;top:858.90px;font-size:12.68px;line-height:16px;font-weight:400;color:#1f272e;letter-spacing:-0.062px;-webkit-text-stroke:0.18px #1f272e;">nguyenvannhan@eur...</span>
<span class="t" style="left:1095.4px;top:858.90px;font-size:12.68px;line-height:16px;font-weight:700;color:#1f272e;letter-spacing:-0.344px;">- Lấy đúng, đủ mẫu N...</span>
<span class="t" style="left:1253.8px;top:858.90px;font-size:12.68px;line-height:16px;font-weight:400;color:#333c44;letter-spacing:-0.138px;-webkit-text-stroke:0.18px #333c44;">Không phù ...</span>
<span class="t" style="left:424.2px;top:893.90px;font-size:12.68px;line-height:16px;font-weight:400;color:#333c44;letter-spacing:0.000px;-webkit-text-stroke:0.18px #333c44;">4</span>
<span class="t" style="left:461.9px;top:893.90px;font-size:12.68px;line-height:16px;font-weight:400;color:#1f272e;letter-spacing:-0.201px;-webkit-text-stroke:0.18px #1f272e;">Bộ phận KCS - NAN</span>
<span class="t" style="left:620.2px;top:893.90px;font-size:12.68px;line-height:16px;font-weight:700;color:#1f272e;letter-spacing:-0.267px;">Quy trình kiểm tra ng...</span>
<span class="t" style="left:778.6px;top:893.90px;font-size:12.68px;line-height:16px;font-weight:400;color:#333c44;letter-spacing:-0.267px;-webkit-text-stroke:0.18px #333c44;">Bùi Văn Mạnh</span>
<span class="t" style="left:937.4px;top:893.90px;font-size:12.68px;line-height:16px;font-weight:400;color:#1f272e;letter-spacing:-0.062px;-webkit-text-stroke:0.18px #1f272e;">nguyenvannhan@eur...</span>
<span class="t" style="left:1095.4px;top:893.90px;font-size:12.68px;line-height:16px;font-weight:700;color:#1f272e;letter-spacing:-0.304px;">"- Kiểm tra mẫu chính...</span>
<div style="position:absolute;left:1085px;top:883px;width:157px;height:35.200000000000045px;overflow:hidden"><span class="t" style="left:10.4px;top:28.70px;font-size:12.68px;line-height:16px;font-weight:700;color:#1f272e;letter-spacing:-0.411px;">- Thiết bị đo, thiết bị k...</span></div>
<span class="t" style="left:1253.8px;top:893.90px;font-size:12.68px;line-height:16px;font-weight:400;color:#333c44;letter-spacing:-0.138px;-webkit-text-stroke:0.18px #333c44;">Không phù ...</span>
<span class="t" style="left:424.2px;top:928.90px;font-size:12.68px;line-height:16px;font-weight:400;color:#333c44;letter-spacing:0.000px;-webkit-text-stroke:0.18px #333c44;">5</span>
<span class="t" style="left:461.9px;top:928.90px;font-size:12.68px;line-height:16px;font-weight:400;color:#1f272e;letter-spacing:-0.201px;-webkit-text-stroke:0.18px #1f272e;">Bộ phận KCS - NAN</span>
<span class="t" style="left:620.2px;top:928.90px;font-size:12.68px;line-height:16px;font-weight:700;color:#1f272e;letter-spacing:-0.267px;">Quy trình kiểm tra ng...</span>
<span class="t" style="left:778.6px;top:928.90px;font-size:12.68px;line-height:16px;font-weight:400;color:#333c44;letter-spacing:-0.267px;-webkit-text-stroke:0.18px #333c44;">Bùi Văn Mạnh</span>
<span class="t" style="left:937.4px;top:928.90px;font-size:12.68px;line-height:16px;font-weight:400;color:#1f272e;letter-spacing:-0.062px;-webkit-text-stroke:0.18px #1f272e;">nguyenvannhan@eur...</span>
<span class="t" style="left:1095.4px;top:928.90px;font-size:12.68px;line-height:16px;font-weight:700;color:#1f272e;letter-spacing:-0.304px;">"- Kiểm tra mẫu chính...</span>
<div style="position:absolute;left:1085px;top:918px;width:157px;height:35.200000000000045px;overflow:hidden"><span class="t" style="left:10.4px;top:28.70px;font-size:12.68px;line-height:16px;font-weight:700;color:#1f272e;letter-spacing:-0.411px;">- Thiết bị đo, thiết bị k...</span></div>
<span class="t" style="left:1253.8px;top:928.90px;font-size:12.68px;line-height:16px;font-weight:400;color:#333c44;letter-spacing:-0.138px;-webkit-text-stroke:0.18px #333c44;">Không phù ...</span>

<!-- bottom chrome -->
<div class="a" style="left:0;top:950px;width:1878px;height:1px;background:#cfd1d3;"></div>
<div class="a" style="left:0;top:951px;width:1878px;height:3px;background:#fbfbfb;"></div>
<div class="a" style="left:0;top:954px;width:1878px;height:1px;background:#a9adb1;"></div>
<div class="a" style="left:0;top:955px;width:1878px;height:5px;background:linear-gradient(90deg,#d3e0ea 0%,#dcdfe2 50%,#dadada 100%);"></div>
</body></html>
